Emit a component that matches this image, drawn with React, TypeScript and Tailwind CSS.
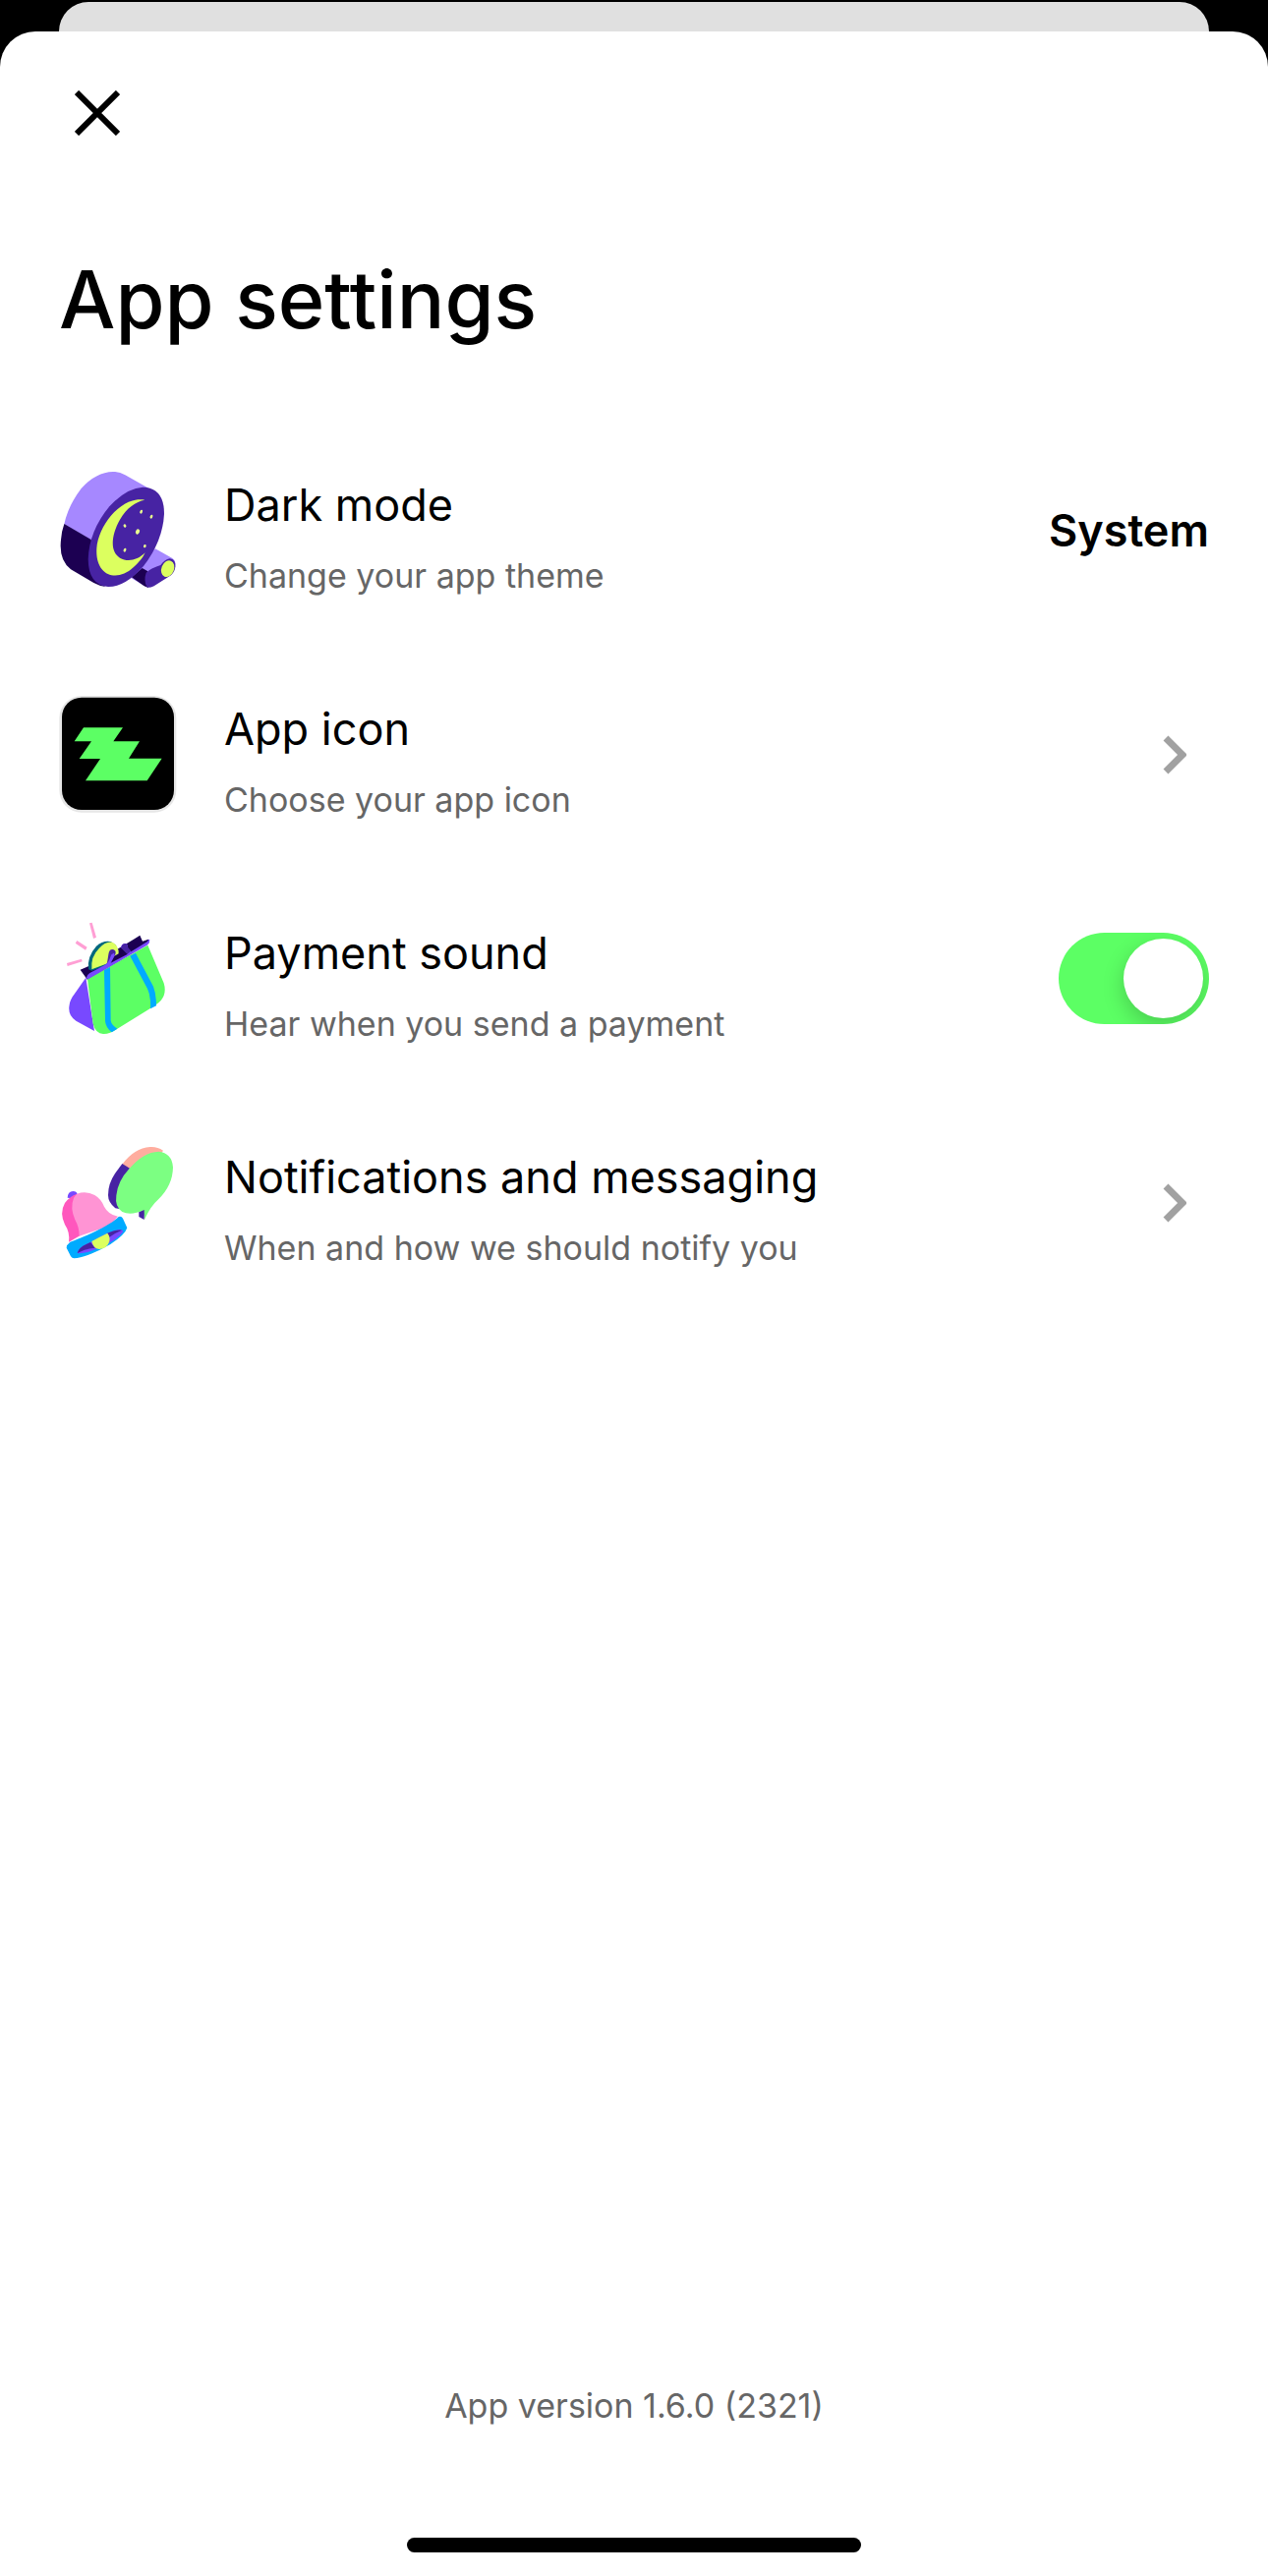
import { useState } from "react";
import type { ReactNode } from "react";

function DarkModeIcon() {
    return (
        <svg viewBox="30 30 360 360" className="size-[120px] shrink-0" aria-hidden="true">
            <path d="M270 300L324 265L376 294Q388 302 385 320L300 383L250 354Z" fill="#a688ff" />
            <path d="M252 352L284 324L300 333L303 384L290 379Z" fill="#1c0052" />
            <path d="M296 338Q310 325 340 315Q352 298 368 295Q387 297 385 320Q384 334 372 346L320 379Q306 387 298 380Q288 362 296 338Z" fill="#4723a3" />
            <ellipse cx="362" cy="326" rx="19" ry="26" transform="rotate(22 362 326)" fill="#dcff5f" />
            <path d="M46 190Q58 133 98 81Q143 31 195 30Q214 29 232 40L322 91L200 280L125 237Z" fill="#a688ff" />
            <path d="M46 189L128 237L170 380Q154 379 136 369L66 328Q29 300 36 238Q38 211 46 189Z" fill="#1c0052" />
            <path d="M286 77Q351 79 351 158Q347 241 288 318Q232 382 180 381Q120 376 119 297Q122 211 184 136Q235 80 286 77Z" fill="#4723a3" />
            <path d="M292 116C223 103 151 190 145 264C140 345 204 371 257 322C276 305 286 292 293 277C270 300 240 307 216 293C184 274 190 222 216 176C237 140 264 121 292 116Z" fill="#dcff5f" />
            <g fill="#e9ff8f">
                <ellipse cx="270" cy="213" rx="6" ry="8" transform="rotate(25 270 213)" />
                <ellipse cx="281" cy="152" rx="4" ry="6" transform="rotate(20 281 152)" />
                <ellipse cx="312" cy="167" rx="4" ry="6" transform="rotate(20 312 167)" />
                <ellipse cx="231" cy="195" rx="4" ry="5" transform="rotate(-30 231 195)" />
                <ellipse cx="231" cy="269" rx="4" ry="6" transform="rotate(20 231 269)" />
                <ellipse cx="292" cy="257" rx="4" ry="5" transform="rotate(20 292 257)" />
            </g>
        </svg>
    );
}

function BrandIcon() {
    return (
        <svg viewBox="30 24 360 360" className="size-[120px] shrink-0" aria-hidden="true">
            <rect x="31" y="24" width="357" height="356" rx="68" fill="#e6e6e6" />
            <rect x="39" y="29" width="342" height="343" rx="60" fill="#000" />
            <path d="M105 121H225L196 163H276L243 215H344L299 283H111L156 216H92L129 163H77Z" fill="#5cff64" />
        </svg>
    );
}

function PurseIcon() {
    return (
        <svg viewBox="30 33 360 360" className="size-[120px] shrink-0" aria-hidden="true">
            <g fill="#ff9fd4">
                <path d="M123 43L131 41L144 86L135 90Z" />
                <path d="M85 96L116 116L111 125L80 104Z" />
                <path d="M54 165L99 152L101 160L56 174Z" />
            </g>
            <path d="M112 209L138 372L82 341Q58 326 61 298Q62 277 78 258Z" fill="#7849ff" />
            <path d="M95 185L126 172L258 92L277 80L285 98L303 92L304 104L117 216Z" fill="#1c0052" />
            <path d="M117 213L301 110L350 226Q361 263 334 286Q320 297 304 306L207 366Q184 382 165 381Q142 380 134 350Z" fill="#5cff64" />
            <path d="M168 186L186 177L188 340Q190 354 208 365L191 376Q173 362 171 342Z" fill="#00abff" />
            <path d="M247 143L264 134L318 236Q327 259 327 295L309 304Q311 266 300 243Z" fill="#00abff" />
            <path d="M120 184Q115 145 144 113Q165 94 188 99L205 111L180 170L130 188Z" fill="#00677d" />
            <path d="M130 184Q126 145 153 119Q173 97 193 101Q213 111 212 136L199 143L178 166Z" fill="#dcff5f" />
            <path d="M177 164L181 139Q183 121 195 123Q206 126 202 139L187 166L172 173Z" fill="#4723a3" />
            <path d="M113 211Q114 201 124 195L171 170Q181 165 184 154L190 139L198 134L200 142L188 164L240 137L219 117Q221 105 233 105Q241 106 239 116L250 130L300 99Q305 88 307 94Q308 102 299 110L119 214Z" fill="#7849ff" />
            <path d="M220 117Q222 105 233 105Q241 107 239 116L250 128L239 137Z" fill="#4723a3" />
        </svg>
    );
}

function BellIcon() {
    return (
        <svg viewBox="30 27 360 360" className="size-[120px] shrink-0" aria-hidden="true">
            <path d="M56 191Q57 172 73 171Q84 171 86 181L72 193Z" fill="#7849ff" />
            <path d="M60 326Q64 296 48 273Q31 237 48 207Q62 187 85 179L118 230L94 307Z" fill="#ff57bd" />
            <path d="M85 179Q113 169 139 183Q158 194 168 218Q180 242 210 248L185 276L92 308Q92 281 79 258Q63 222 75 192Q79 184 85 179Z" fill="#ff94d4" />
            <path d="M54 337L64 326C95 316 188 276 212 249Q221 246 225 254L238 283Q232 304 187 333C150 354 107 374 76 376Q70 376 66 370L53 344Z" fill="#00abff" />
            <path d="M86 360Q89 342 126 327Q182 293 212 288Q224 287 226 295Q208 320 166 337Q113 364 86 360Z" fill="#7849ff" />
            <path d="M86 360Q89 342 126 327L140 344Q112 346 86 360ZM176 300Q204 288 222 290Q204 297 184 311Z" fill="#4723a3" />
            <path d="M130 324Q151 312 178 299Q187 311 184 324Q177 347 153 348Q134 345 130 324Z" fill="#dcff5f" />
            <path d="M223 89Q260 39 308 36Q329 34 348 47L324 81L242 102Z" fill="#ffad9f" />
            <path d="M223 87L246 101L218 226L202 223Q180 205 180 183Q180 148 201 117Z" fill="#4723a3" />
            <path d="M274 234L292 223L290 258L274 249Z" fill="#4723a3" />
            <path d="M244 103Q287 52 334 50Q375 54 378 98Q377 154 332 197Q310 216 291 257L290 228Q250 247 223 234Q200 219 205 184Q209 141 244 103Z" fill="#7cff82" />
        </svg>
    );
}

function Chevron() {
    return (
        <svg viewBox="0 0 24 40" className="mr-[23px] h-10 w-6" fill="none" aria-hidden="true">
            <path d="M3 3L20 20L3 37" stroke="#a1a1a1" strokeWidth="7" />
        </svg>
    );
}

function RowContent({ icon, title, subtitle, children }: { icon: ReactNode; title: string; subtitle: string; children: ReactNode }) {
    return (
        <>
            {icon}
            <span className="flex min-w-0 flex-1 flex-col gap-[18px] pt-1">
                <span className="text-[45px] leading-[60px]">{title}</span>
                <span className="text-[34px] leading-[48px] text-[#666666]">{subtitle}</span>
            </span>
            <span className="flex h-[119px] shrink-0 items-center">{children}</span>
        </>
    );
}

const rowClass = "flex w-full cursor-pointer items-start gap-12 text-left";

export default function App() {
    const [sound, setSound] = useState(true);

    return (
        <div className="flex min-h-screen flex-col bg-black pt-[2px] font-['Inter','Liberation_Sans',sans-serif] text-black">
            <div className="mx-[60px] h-[30px] rounded-t-[30px] bg-[#e0e0e0]" />

            <main className="flex flex-1 flex-col rounded-t-[36px] bg-white px-[60px] pt-11 pb-6">
                <button type="button" aria-label="Close" className="flex size-[78px] cursor-pointer items-center justify-center">
                    <svg viewBox="0 0 46 46" className="size-[46px]" fill="none" aria-hidden="true">
                        <path d="M2 2L44 44M44 2L2 44" stroke="#000" strokeWidth="6" />
                    </svg>
                </button>

                <h1 className="mt-[101px] text-[81px] leading-[100px] font-medium">App settings</h1>

                <ul className="mt-[125px] flex flex-col gap-[98px]">
                    <li>
                        <button type="button" className={rowClass}>
                            <RowContent icon={<DarkModeIcon />} title="Dark mode" subtitle="Change your app theme">
                                <span className="text-[45px] leading-[60px] font-semibold">System</span>
                            </RowContent>
                        </button>
                    </li>
                    <li>
                        <a href="#app-icon" className={rowClass}>
                            <RowContent icon={<BrandIcon />} title="App icon" subtitle="Choose your app icon">
                                <Chevron />
                            </RowContent>
                        </a>
                    </li>
                    <li>
                        <label htmlFor="payment-sound" className={rowClass}>
                            <RowContent icon={<PurseIcon />} title="Payment sound" subtitle="Hear when you send a payment">
                                <input
                                    id="payment-sound"
                                    type="checkbox"
                                    role="switch"
                                    checked={sound}
                                    onChange={(e) => setSound(e.target.checked)}
                                    className="flex h-[93px] w-[153px] cursor-pointer appearance-none items-center overflow-hidden rounded-full bg-gray-300 p-[6px] before:size-[81px] before:rounded-full before:bg-white before:shadow-[0_8px_22px_rgba(0,0,0,0.2)] checked:justify-end checked:bg-[#5cff64]"
                                />
                            </RowContent>
                        </label>
                    </li>
                    <li>
                        <a href="#notifications" className={rowClass}>
                            <RowContent icon={<BellIcon />} title="Notifications and messaging" subtitle="When and how we should notify you">
                                <Chevron />
                            </RowContent>
                        </a>
                    </li>
                </ul>

                <footer className="mt-auto flex flex-col items-center gap-[110px]">
                    <p className="text-[34px] leading-[48px] text-[#666666]">App version 1.6.0 (2321)</p>
                    <div className="h-[15px] w-[462px] rounded-full bg-black" />
                </footer>
            </main>
        </div>
    );
}
